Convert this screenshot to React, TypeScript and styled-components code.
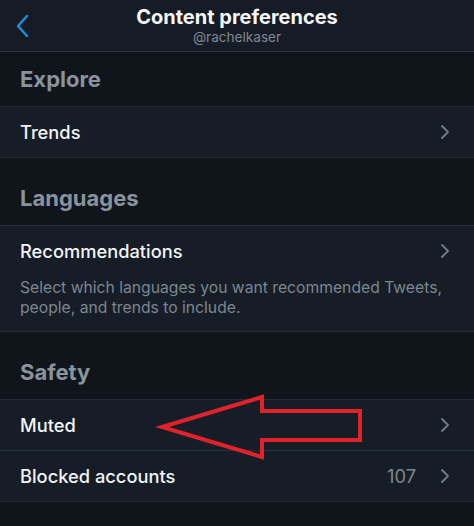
import styled, { createGlobalStyle } from 'styled-components'

const GlobalStyle = createGlobalStyle`
  html, body {
    margin: 0;
    padding: 0;
    background: #10151c;
  }
  body {
    font-family: Inter, "Noto Sans", "Liberation Sans", sans-serif;
    -webkit-font-smoothing: antialiased;
  }
  * {
    box-sizing: border-box;
  }
`

const Screen = styled.div`
  position: relative;
  width: 474px;
  height: 526px;
  overflow: hidden;
  background: #10151c;
  color: #f2f4f6;
`

const Header = styled.header`
  height: 52px;
  padding-bottom: 2px;
  background: #161c25;
  border-bottom: 1px solid #2a323c;
  display: flex;
  flex-direction: column;
  align-items: center;
  justify-content: center;
  position: relative;
  > h1 {
    margin: 0;
    font-size: 20px;
    font-weight: 700;
    line-height: 24px;
    color: #f5f7f9;
  }
  > span {
    font-size: 13.6px;
    line-height: 16px;
    color: #7f8891;
  }
`

const BackButton = styled.button`
  position: absolute;
  left: 15px;
  top: 14px;
  border: 0;
  background: none;
  padding: 0;
  display: flex;
`

const SectionTitle = styled.h2<{ $gap: number }>`
  margin: ${p => p.$gap}px 0 0;
  height: 54px;
  padding: 0 20px;
  display: flex;
  align-items: center;
  font-size: 22px;
  font-weight: 700;
  color: #8a939c;
`

const Group = styled.ul`
  margin: 0;
  padding: 0;
  list-style: none;
  background: #161d27;
  border-top: 1px solid #232b35;
  border-bottom: 1px solid #232b35;
`

const Row = styled.li<{ $divider?: boolean }>`
  padding: 0 24px 0 20px;
  border-top: ${p => (p.$divider ? '1px solid #29313b' : '0')};
`

const RowMain = styled.div`
  height: 50px;
  display: flex;
  align-items: center;
  > .label {
    flex: 1;
    font-size: 18.3px;
    font-weight: 500;
    color: #f2f4f6;
  }
  > .value {
    font-size: 18.3px;
    color: #7f8891;
    margin-right: 24px;
  }
`

const Note = styled.p`
  margin: 2px 0 0;
  padding-bottom: 13px;
  font-size: 15.7px;
  line-height: 20px;
  color: #7d868f;
`

const Annotation = styled.svg`
  position: absolute;
  left: 0;
  top: 0;
  pointer-events: none;
`

function Chevron() {
  return (
    <svg width="10" height="16" viewBox="0 0 10 16">
      <path d="M2 2l6 6-6 6" fill="none" stroke="#747d87" strokeWidth="1.8" strokeLinecap="round" strokeLinejoin="round" />
    </svg>
  )
}

function App() {
  return (
    <Screen>
      <GlobalStyle />
      <Header>
        <BackButton aria-label="Back">
          <svg width="16" height="24" viewBox="0 0 16 24">
            <path d="M12 2L3 12l9 10" fill="none" stroke="#1d8fe0" strokeWidth="2.4" strokeLinecap="round" strokeLinejoin="round" />
          </svg>
        </BackButton>
        <h1>Content preferences</h1>
        <span>@rachelkaser</span>
      </Header>

      <SectionTitle $gap={0}>Explore</SectionTitle>
      <Group>
        <Row>
          <RowMain>
            <span className="label">Trends</span>
            <Chevron />
          </RowMain>
        </Row>
      </Group>

      <SectionTitle $gap={13}>Languages</SectionTitle>
      <Group>
        <Row>
          <RowMain>
            <span className="label">Recommendations</span>
            <Chevron />
          </RowMain>
          <Note>Select which languages you want recommended Tweets, people, and trends to include.</Note>
        </Row>
      </Group>

      <SectionTitle $gap={13}>Safety</SectionTitle>
      <Group>
        <Row>
          <RowMain>
            <span className="label">Muted</span>
            <Chevron />
          </RowMain>
        </Row>
        <Row $divider>
          <RowMain>
            <span className="label">Blocked accounts</span>
            <span className="value">107</span>
            <Chevron />
          </RowMain>
        </Row>
      </Group>

      <Annotation width="474" height="526" viewBox="0 0 474 526">
        <path
          d="M162 427 L262 397 L262 411 L360 411 L360 440 L262 440 L262 457 Z"
          fill="none"
          stroke="#e2222a"
          strokeWidth="4"
          strokeLinejoin="miter"
        />
      </Annotation>
    </Screen>
  )
}

export default App
